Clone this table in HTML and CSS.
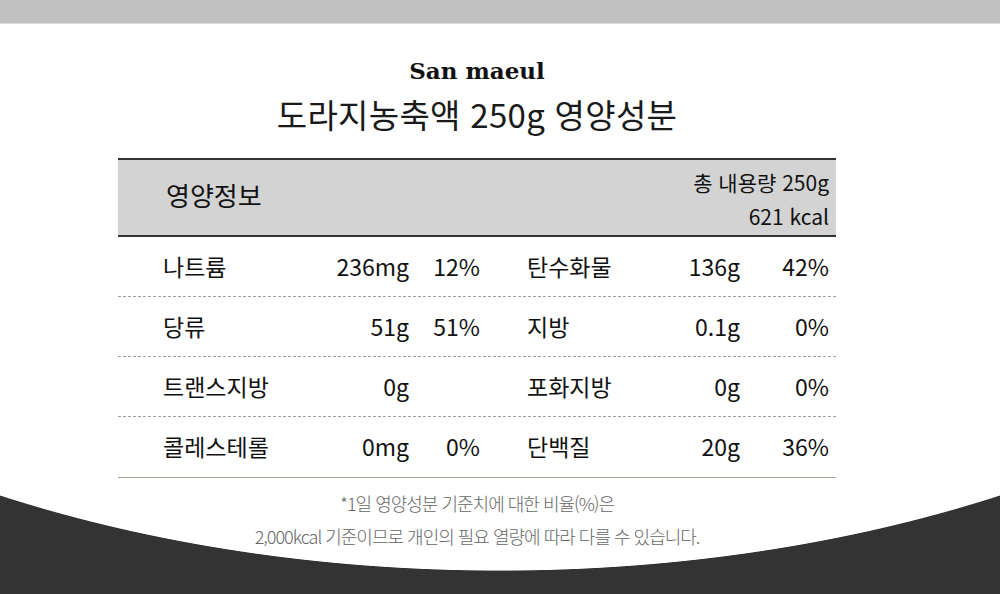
FILE: index.html
```html
<!DOCTYPE html>
<html lang="ko">
<head>
<meta charset="utf-8">
<link rel="stylesheet" href="styles.css">
</head>
<body>
<div class="page">
  <div class="topbar"></div>
  <div class="content">
    <div class="brand">San maeul</div>
    <h1 class="title">도라지농축액 250g 영양성분</h1>
    <div class="facts">
      <div class="facts-head">
        <div class="head-title">영양정보</div>
        <div class="head-total">
          <div>총 내용량 250g</div>
          <div>621 kcal</div>
        </div>
      </div>
      <div class="row">
        <div class="lab">나트륨</div><div class="val">236mg</div><div class="pct">12%</div>
        <div class="lab lab2">탄수화물</div><div class="val">136g</div><div class="pct">42%</div>
      </div>
      <div class="row">
        <div class="lab">당류</div><div class="val">51g</div><div class="pct">51%</div>
        <div class="lab lab2">지방</div><div class="val">0.1g</div><div class="pct">0%</div>
      </div>
      <div class="row">
        <div class="lab">트랜스지방</div><div class="val">0g</div><div class="pct"></div>
        <div class="lab lab2">포화지방</div><div class="val">0g</div><div class="pct">0%</div>
      </div>
      <div class="row row-last">
        <div class="lab">콜레스테롤</div><div class="val">0mg</div><div class="pct">0%</div>
        <div class="lab lab2">단백질</div><div class="val">20g</div><div class="pct">36%</div>
      </div>
    </div>
    <p class="note">*1일 영양성분 기준치에 대한 비율(%)은<br>2,000kcal 기준이므로 개인의 필요 열량에 따라 다를 수 있습니다.</p>
  </div>
</div>
</body>
</html>
```

FILE: styles.css
```css
html, body {
  margin: 0;
  padding: 0;
}
body {
  width: 1000px;
  height: 594px;
  overflow: hidden;
  font-family: "Noto Sans CJK KR", "Noto Sans", sans-serif;
  color: #111;
}
.page {
  height: 594px;
  background: radial-gradient(1000px 560px at 500px 11px, #fff 99.85%, #333 100%);
}
.topbar {
  height: 23px;
  background: #c1c1c1;
  border-bottom: 1px solid #dcdcdc;
}
.content {
  width: 718px;
  margin-left: 118px;
}
.brand {
  margin-top: 31px;
  text-align: center;
  font-family: "DejaVu Serif", serif;
  font-weight: bold;
  font-size: 23px;
  line-height: 32px;
  color: #111;
}
.title {
  margin: 5px 0 0;
  text-align: center;
  font-weight: 400;
  font-size: 33px;
  line-height: 44px;
  letter-spacing: 0.3px;
  color: #1a1a1a;
}
.facts {
  margin-top: 22px;
}
.facts-head {
  display: flex;
  justify-content: space-between;
  align-items: center;
  height: 75px;
  background: #d3d3d3;
  border-top: 2px solid #333;
  border-bottom: 2px solid #333;
  padding: 0 7px 0 48px;
}
.head-title {
  font-size: 26px;
  margin-top: -6px;
}
.head-total {
  text-align: right;
  font-size: 21px;
  line-height: 34px;
  margin-top: 3px;
}
.row {
  display: grid;
  grid-template-columns: 170px 76px 71px 180px 80px 89px;
  align-items: center;
  height: 59px;
  padding: 0 7px 0 45px;
  border-bottom: 1px dashed #a59f94;
  font-size: 23px;
}
.row > div {
  margin-top: -2px;
}
.row-last {
  height: 60px;
  border-bottom: 1px solid #a59f94;
}
.lab2 {
  padding-left: 47px;
}
.val, .pct {
  text-align: right;
}
.note {
  margin: 9px 0 0;
  text-align: center;
  font-size: 18px;
  line-height: 33px;
  letter-spacing: -1px;
  color: #666;
  font-weight: 300;
}
```
